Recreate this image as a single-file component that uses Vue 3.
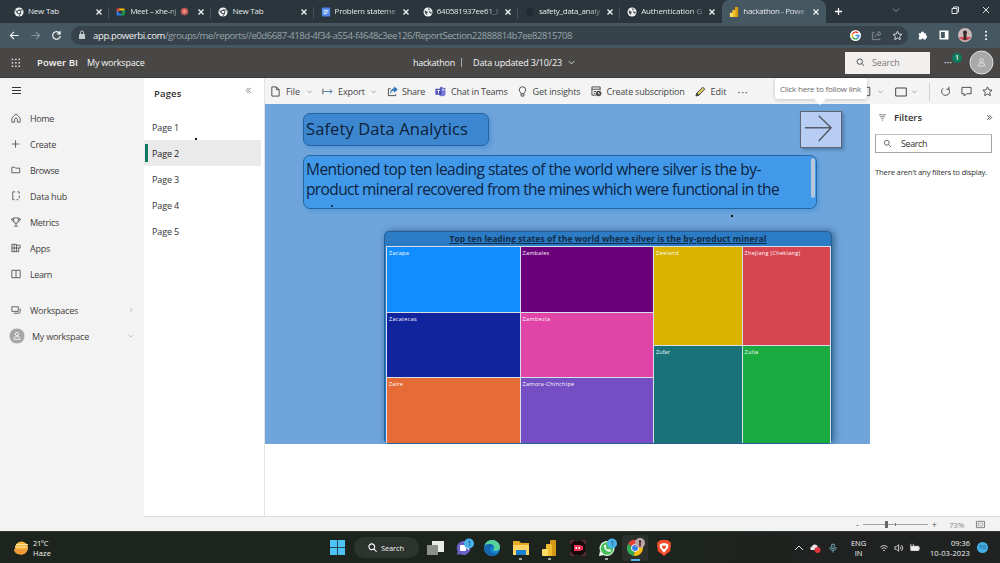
<script setup>
// Spreads or tightens a label's letters so that it takes the given width.
const vFit = {
  mounted(el, { value }) {
    const range = document.createRange()
    range.selectNodeContents(el)
    const natural = range.getBoundingClientRect().width
    const count = el.textContent.trim().length
    if (value && count) el.style.letterSpacing = `${((value - natural) / count).toFixed(3)}px`
  }
}

const tabs = [
  { icon: 'chrome', title: 'New Tab', w: 31 },
  { icon: 'meet', title: 'Meet – xhe-nj', w: 46, rec: true },
  { icon: 'chrome', title: 'New Tab', w: 31 },
  { icon: 'docs', title: 'Problem stateme', w: 61, nosep: true },
  { icon: 'globe', title: '640581937ee61_l', w: 61 },
  { icon: 'github', title: 'safety_data_analy', w: 61 },
  { icon: 'globe', title: 'Authentication G', w: 61, nosep: true },
  { icon: 'pbi', title: 'hackathon - Powe', w: 61, active: true }
]

const nav = [
  { label: 'Home', w: 24, d: 'M2 6.5 6.5 2 11 6.5V11H8V8a1.5 1.5 0 0 0-3 0v3H2z' },
  { label: 'Create', w: 26, d: 'M6 2.5v8M2 6.5h8' },
  { label: 'Browse', w: 29, d: 'M2 3.5h3l1 1h4.5v5H2z' },
  { label: 'Data hub', w: 37, d: 'M5.5 2H3v8.5h2M8 2h2v2M10 6v3M7 10.5h2' },
  { label: 'Metrics', w: 29, d: 'M4 2h5v3.5a2.5 2.5 0 0 1-5 0zM4 3H2v1.5l2 1.5M9 3h2v1.5L9 6M6.5 8v2.5M4.5 11h4' },
  { label: 'Apps', w: 20, d: 'M2 2.5h5v8H2zM2 6.5h7.5v4H7M7 3.5h4v3H9M4.5 2.5v8' },
  { label: 'Learn', w: 22, d: 'M2 2.5h9v8H2zM6.5 2.5v8' }
]

const pages = ['Page 1', 'Page 2', 'Page 3', 'Page 4', 'Page 5']

const leftTiles = [
  { name: 'Zacapa', color: '#118dff', w: 20 },
  { name: 'Zambales', color: '#6b007b', w: 27 },
  { name: 'Zacatecas', color: '#12239e', w: 28 },
  { name: 'Zambezia', color: '#e044a7', w: 28 },
  { name: 'Zaire', color: '#e66c37', w: 14 },
  { name: 'Zamora-Chinchipe', color: '#744ec2', w: 52 }
]
const rightTiles = [
  { name: 'Zeeland', color: '#d9b300', w: 23 },
  { name: 'Zhejiang (Chekiang)', color: '#d64550', w: 56 },
  { name: 'Zufar', color: '#197278', w: 14 },
  { name: 'Zulia', color: '#1aab40', w: 14 }
]
</script>

<template>
  <div class="screen">
    <header class="tabs">
      <div v-for="(t, i) in tabs" :key="i" class="tab" :class="{ active: t.active, sep: !t.active && !t.nosep }">
        <svg class="fav" viewBox="0 0 12 12">
          <g v-if="t.icon === 'chrome'">
            <circle cx="6" cy="6" r="5.5" fill="#eef1f2" />
            <circle cx="6" cy="6" r="2.2" fill="#eef1f2" stroke="#39444b" stroke-width="1.2" />
            <path d="M6 3.5h5M3.8 7.2 1.6 3.2M8.1 7.4 5.8 11.3" stroke="#39444b" stroke-width="1" />
          </g>
          <g v-else-if="t.icon === 'meet'" fill="none" stroke-width="2.4">
            <path d="M2 6V3h3" stroke="#e94235" />
            <path d="M4 3h5v2" stroke="#fbbc05" />
            <path d="M9 4v5H6" stroke="#14a04b" />
            <path d="M2 5v4h4" stroke="#2b7de9" />
            <path d="m9 6 2-2v4z" fill="#14a04b" stroke="none" />
          </g>
          <g v-else-if="t.icon === 'docs'">
            <rect x="1" y=".5" width="10" height="11" rx="1" fill="#4f86ec" />
            <path d="M3 4h6M3 6h6M3 8h4" stroke="#fff" />
          </g>
          <g v-else-if="t.icon === 'globe'">
            <circle cx="6" cy="6" r="5.4" fill="#edf0f1" />
            <path d="m2 4 2.5 1L6 6.500 4.500 8 5 10 2.500 7.500zM6 1.500l2.500 1L7 4.500 9 6l1.500-.5-.5 2.500-2-.5" fill="#46525a" />
          </g>
          <circle v-else-if="t.icon === 'github'" cx="6" cy="6" r="5" fill="#222c33" />
          <g v-else>
            <rect x="7" y="0" width="4" height="12" rx=".8" fill="#d99a12" />
            <rect x="4" y="3.500" width="4" height="8.500" rx=".8" fill="#f2bd27" />
            <rect x="1" y="7" width="4" height="5" rx=".8" fill="#fbdc64" />
          </g>
        </svg>
        <div class="tab-title" :class="{ fade: t.w > 40 }"><span v-fit="t.w">{{ t.title }}</span></div>
        <svg v-if="t.rec" class="rec" viewBox="0 0 10 10">
          <circle cx="5" cy="5" r="3.9" fill="#d9625f" stroke="#a4534f" />
          <circle cx="5" cy="5" r="1.500" fill="#f3a29b" />
        </svg>
        <svg class="close" viewBox="0 0 8 8"><path d="m1.500 1.500 5 5m0-5-5 5" /></svg>
      </div>
      <svg class="newtab" viewBox="0 0 10 10"><path d="M5 1v8M1 5h8" /></svg>
      <div class="winctl">
        <svg viewBox="0 0 10 10" class="dim"><path d="m2 3.500 3 3 3-3" /></svg>
        <svg viewBox="0 0 10 10"><path d="M2 3.500h5v5H2zM3.500 3.500V2h5v5H7" /></svg>
        <svg viewBox="0 0 10 10"><path d="m2 2 6 6m0-6L2 8" /></svg>
      </div>
    </header>

    <div class="address">
      <svg class="nv" viewBox="0 0 12 12"><path d="M10.500 6h-9M5.500 2l-4 4 4 4" /></svg>
      <svg class="nv off" viewBox="0 0 12 12"><path d="M1.500 6h9M6.500 2l4 4-4 4" /></svg>
      <svg class="nv" viewBox="0 0 12 12"><path d="M9.500 3.500A4.200 4.200 0 1 0 10.200 6.500M10 1v3.300H6.700" /></svg>
      <div class="pill">
        <svg class="lock" viewBox="0 0 8 10"><rect x="1" y="4" width="6" height="5" rx=".6" fill="#c3cace" /><path d="M2.500 4V2.500a1.500 1.500 0 0 1 3 0V4" fill="none" stroke="#c3cace" /></svg>
        <div class="url"><b v-fit="72">app.powerbi.com</b><span v-fit="407">/groups/me/reports//e0d6687-418d-4f34-a554-f4648c3ee126/ReportSection22888814b7ee82815708</span></div>
        <svg class="g" viewBox="0 0 12 12">
          <circle cx="6" cy="6" r="6" fill="#fff" />
          <g fill="none" stroke-width="1.600">
            <path d="M8.600 3.300A3.600 3.600 0 0 0 2.800 4.400" stroke="#ea4335" />
            <path d="M2.800 4.400a3.600 3.600 0 0 0 0 3.200" stroke="#fbbc05" />
            <path d="M2.800 7.600a3.600 3.600 0 0 0 5.500 1.300" stroke="#34a853" />
            <path d="M8.300 8.900A3.600 3.600 0 0 0 9.600 6.100H6" stroke="#4285f4" />
          </g>
        </svg>
        <svg class="share" viewBox="0 0 12 12"><path d="M4 3H1.500v7.500h8V9M4 8c.5-2.500 2-3.500 4-3.500V6.500L11 4 8 1.500v2" /></svg>
        <svg class="st" viewBox="0 0 12 12"><path d="m6 1.300 1.400 3.100 3.400.4-2.500 2.300.7 3.400L6 8.800l-3 1.700.7-3.400L1.200 4.800l3.400-.4z" /></svg>
      </div>
      <svg class="ext" viewBox="0 0 12 12"><path d="M1 4h2.800a1.600 1.600 0 1 1 3 0H9.500v2.500a1.500 1.500 0 1 1 0 3V11.500H6.800a1.400 1.400 0 0 0-2.800 0H1V8.500a1.400 1.400 0 0 0 0-2.500z" fill="#fff" /></svg>
      <svg class="panel" viewBox="0 0 10 10"><path d="M1.200 1.200h7.600v7.600H1.200z" fill="none" stroke="#fff" stroke-width="1.400" /><path d="M5.800 1h3v8h-3z" fill="#fff" /></svg>
      <svg class="me" viewBox="0 0 14 14"><circle cx="7" cy="7" r="7" fill="#c9b9b8" /><path d="M1 9h12a7 7 0 0 1-12 0" fill="#d94b5b" /><circle cx="7" cy="4.500" r="2" fill="#302625" /><path d="M5.500 6h3v6h-3z" fill="#40292b" /></svg>
      <svg class="dots" viewBox="0 0 4 12"><circle cx="2" cy="2" r="1.100" /><circle cx="2" cy="6" r="1.100" /><circle cx="2" cy="10" r="1.100" /></svg>
    </div>

    <div class="pbi-head">
      <svg class="waffle" viewBox="0 0 10 10"><g fill="#dedddc"><template v-for="r in 3" :key="r"><rect v-for="c in 3" :key="c" :x="c * 3.400 - 2.700" :y="r * 3.400 - 2.700" width="1.500" height="1.500" /></template></g></svg>
      <b class="brand" v-fit="41">Power BI</b>
      <span class="ws" v-fit="57.500">My workspace</span>
      <span class="rep" v-fit="42">hackathon</span><i class="bar"></i>
      <span class="upd" v-fit="89">Data updated 3/10/23</span>
      <svg class="hchev" viewBox="0 0 8 8"><path d="m1 2.500 3 3 3-3" /></svg>
      <div class="hsearch">
        <svg viewBox="0 0 10 10"><circle cx="4.200" cy="4" r="3" /><path d="M6.400 6.200 9 8.800" /></svg>
        <span v-fit="27.500">Search</span>
      </div>
      <div class="more">···<em>1</em></div>
      <svg class="avatar" viewBox="0 0 24 24"><circle cx="12" cy="12" r="12" fill="#a9a9a9" /><circle cx="12" cy="9.800" r="1.900" /><path d="M8.800 15.500v-1.500c0-2 6.400-2 6.400 0v1.500z" /></svg>
    </div>

    <main>
      <nav>
        <svg class="burger" viewBox="0 0 9 9"><path d="M0 1.500h9M0 4.500h9M0 7.500h9" /></svg>
        <ul>
          <li v-for="n in nav" :key="n.label">
            <svg viewBox="0 0 13 13"><path :d="n.d" /></svg><span v-fit="n.w">{{ n.label }}</span>
          </li>
          <li class="gap">
            <svg viewBox="0 0 13 13"><path d="M2 3h7v5H2zM4 10h5.500a1.500 1.500 0 0 0 1.500-1.500V5" /></svg><span v-fit="48">Workspaces</span>
            <svg class="chev" viewBox="0 0 8 8"><path d="m2.500 1 3 3-3 3" /></svg>
          </li>
          <li class="mine">
            <svg class="av" viewBox="0 0 24 24"><circle cx="12" cy="12" r="12" fill="#a6a6a6" /><circle cx="12" cy="9" r="2.500" /><path d="M7.500 17v-2c0-2.800 9-2.800 9 0v2z" /></svg><span v-fit="57">My workspace</span>
            <svg class="chev" viewBox="0 0 8 8"><path d="m1 2.500 3 3 3-3" /></svg>
          </li>
        </ul>
      </nav>

      <div class="work">
        <aside class="pages">
          <div class="ptitle"><span v-fit="27.500">Pages</span>
            <svg viewBox="0 0 8 8"><path d="M4 1 1.500 4 4 7M6.500 1 4 4l2.500 3" /></svg>
          </div>
          <div v-for="p in pages" :key="p" class="page" :class="{ on: p === 'Page 2' }"><span v-fit="27">{{ p }}</span></div>
        </aside>

        <section class="report">
          <div class="toolbar">
            <svg class="tfile" viewBox="0 0 12 12"><path d="M2 1h5l3 3v7H2zM7 1v3h3" /></svg><span v-fit="14">File</span>
            <svg class="c c1" viewBox="0 0 8 8"><path d="m1.500 3 2.500 2.500L6.500 3" /></svg>
            <svg class="texp" viewBox="0 0 12 12"><path d="M1 3v6" /><path d="M2 6h9M8.500 3.500 11 6 8.500 8.500" stroke="#3f78a8" /></svg><span v-fit="27">Export</span>
            <svg class="c c2" viewBox="0 0 8 8"><path d="m1.500 3 2.500 2.500L6.500 3" /></svg>
            <svg class="tshare" viewBox="0 0 12 12"><path d="M4 3H1.500v7.500h8V9" /><path d="M4 8c.5-2.500 2-3 4-3V7l3.300-3.300L8 .8v2C5 3 4 5 4 8z" fill="#2672b8" stroke="#2672b8" stroke-width=".5" /></svg><span v-fit="23">Share</span>
            <svg class="tteams" viewBox="0 0 12 12"><g stroke="none"><circle cx="7" cy="2.500" r="1.600" fill="#6264c7" /><circle cx="10.300" cy="3" r="1.200" fill="#5658b5" /><path d="M4 4.500h7.500v4a2.500 2.500 0 0 1-3 2.500C6 12 4 10.500 4 8z" fill="#7779d4" /><rect x=".5" y="3" width="6.500" height="6.500" fill="#474ab0" /></g><path d="M2 4.800h3.500M3.750 4.800V8.300" stroke="#fff" /></svg><span v-fit="56.500">Chat in Teams</span>
            <svg class="tbulb" viewBox="0 0 12 12"><path d="M4.500 8.500C4.500 7 2.500 6.500 2.500 4.300a3.500 3.500 0 0 1 7 0C9.500 6.500 7.500 7 7.500 8.500zM4.500 11h3M4.500 8.500V11m3 0V8.500" /></svg><span v-fit="48">Get insights</span>
            <svg class="tsub" viewBox="0 0 12 12"><path d="M5.500 10H1V1h9v3.500M1 3.500h9M3 6h2.500M3 8h1.500" /><circle cx="8.300" cy="8.300" r="3" fill="#4b4a49" stroke="none" /><path d="M8.300 6.500v2h1.500" stroke="#fff" stroke-width=".8" /></svg><span v-fit="78">Create subscription</span>
            <svg class="tedit" viewBox="0 0 12 12"><path d="m1.200 10.800.8-3L8.500 1.300l2.200 2.200L4.200 10z" fill="#d8ca68" /><path d="m1.200 10.800 3-.8L2 7.800z" fill="#444" /></svg><span v-fit="16">Edit</span>
            <span class="ell" v-fit="11">···</span>
            <div class="tright">
              <svg class="r1" viewBox="0 0 12 12"><path d="M1 1.500h7.500v9H1" /></svg>
              <svg class="c" viewBox="0 0 8 8"><path d="m1.500 3 2.500 2.500L6.500 3" /></svg>
              <svg class="r2" viewBox="0 0 12 12"><path d="M.7 2h10.600v8H.7z" /></svg>
              <svg class="c" viewBox="0 0 8 8"><path d="m1.500 3 2.500 2.500L6.500 3" /></svg>
              <i></i>
              <svg class="r3" viewBox="0 0 12 12"><path d="M9 2.800a4.300 4.300 0 1 1-5.500-.3M9.800.8v2.700H7" /></svg>
              <svg class="r4" viewBox="0 0 12 12"><path d="M1 1.500h10v7H6L3.500 11V8.500H1z" /></svg>
              <svg class="r5" viewBox="0 0 12 12"><path d="m6 1 1.500 3.200 3.500.4-2.600 2.400.7 3.500L6 8.800l-3.100 1.700.7-3.500L1 4.600l3.500-.4z" /></svg>
            </div>
          </div>

          <div class="body">
            <div class="canvas">
              <div class="row1">
                <div class="title"><span v-fit="162">Safety Data Analytics</span></div>
                <div class="go">
                  <svg viewBox="0 0 42 38"><path d="M3.500 17h28M18.500 4l13.500 13-13.500 14.500" /></svg>
                  <div class="tip"><span v-fit="81">Click here to follow link</span></div>
                </div>
              </div>
              <div class="desc">
                <p><span v-fit="455">Mentioned top ten leading states of the world where silver is the by-</span></p>
                <p><span v-fit="473">product mineral recovered from the mines which were functional in the</span></p>
                <i class="idot"></i>
                <i class="thumb"></i>
              </div>
              <div class="chart">
                <h3><span v-fit="317">Top ten leading states of the world where silver is the by-product mineral</span></h3>
                <div class="tree">
                  <div class="lt"><div v-for="t in leftTiles" :key="t.name" :style="{ background: t.color }"><span v-fit="t.w">{{ t.name }}</span></div></div>
                  <div class="rt"><div v-for="t in rightTiles" :key="t.name" :style="{ background: t.color }"><span v-fit="t.w">{{ t.name }}</span></div></div>
                </div>
              </div>
            </div>
            <aside class="filters">
              <div class="fhead">
                <svg class="fi" viewBox="0 0 10 10"><path d="M1 2h8M2.200 4.200h5.600M3.500 6.400h3M4.500 8.500h1" /></svg>
                <b v-fit="28">Filters</b>
                <svg class="ff" viewBox="0 0 8 8"><path d="M1.500 1.500 4 4 1.500 6.500M4 1.500 6.500 4 4 6.500" /></svg>
              </div>
              <div class="fsearch"><svg viewBox="0 0 10 10"><circle cx="4.200" cy="4.200" r="2.700" /><path d="m6.200 6.200 2.600 2.600" /></svg><span v-fit="26">Search</span></div>
              <p><span v-fit="112">There aren't any filters to display.</span></p>
            </aside>
          </div>
        </section>

        <footer class="zoombar">
          <span>-</span><div class="slider"><i></i></div><span class="pl">+</span>
          <span class="pct" v-fit="15">73%</span>
          <svg viewBox="0 0 12 10"><path d="M1.500 1.500h9v7h-9z" /><path d="M3.500 3.500h5v3h-5z" stroke-width=".6" /></svg>
        </footer>
      </div>
    </main>

    <footer class="taskbar">
      <div class="weather">
        <svg viewBox="0 0 16 16"><circle cx="8.500" cy="8" r="6.500" fill="#f6b73c" /><path d="M1 9h13c0 4-3 5.500-6 5.500S1 13.500 1 9" fill="#f09a38" /><path d="M3 4.500h12M2 7h12" stroke="#ffe2a0" stroke-width="1" /></svg>
        <div><span v-fit="15">21°C</span><span v-fit="18">Haze</span></div>
      </div>
      <div class="apps">
        <svg class="win" viewBox="0 0 16 16"><path d="M0 0h7.600v7.600H0zM8.400 0H16v7.600H8.400zM0 8.400h7.600V16H0zM8.400 8.400H16V16H8.400z" fill="#4cc2f5" /></svg>
        <div class="tsearch"><svg viewBox="0 0 10 10"><circle cx="4.200" cy="4.200" r="3.200" /><path d="m6.500 6.500 3 3" /></svg><span v-fit="23">Search</span></div>
        <svg class="a" viewBox="0 0 18 18"><path d="M6 2h12v11H6z" fill="#e9ebe9" /><path d="M1 6h11v10H1z" fill="#8c8f8c" /></svg>
        <svg class="a" viewBox="0 0 18 18"><path d="M8 2a7 7 0 1 1-3 13l-3 1 .7-3.500A7 7 0 0 1 8 2" fill="#6b62c8" /><rect x="5" y="6" width="6" height="6" rx="1" fill="#fff" /><path d="m11 8 3-2v5l-3-2z" fill="#fff" /><circle cx="14" cy="4.500" r="5" fill="#4ab2ea" /><text x="12.600" y="7" fill="#123a58">1</text></svg>
        <svg class="a" viewBox="0 0 18 18"><circle cx="9" cy="9" r="8" fill="#1681d0" /><path d="M1.500 7C3 2 7 .8 10 1.100c4.500.5 7 4 7 7 0 3-2.500 4-5 4-1.500 0-2-1-1.200-2C12 7.500 10 5 7 5S2 6 1.500 7" fill="#55d39a" /><path d="M1 8c1-2.500 4-3.500 6.500-3 1.700.3 2.800 1.500 2.800 2.800C7 7.500 6 11 8 13c1.700 2 5 2 6.500 1.500C10 19 .5 17 1 8" fill="#1767ad" /></svg>
        <svg class="a run" viewBox="0 0 18 18"><path d="M1 2h6l2 2h8v12H1z" fill="#e9a927" /><path d="M1 6h16v10H1z" fill="#ffd666" /><path d="M4 11h10v5H4z" fill="#1780d1" /></svg>
        <svg class="a run" viewBox="0 0 18 18"><rect x="10" y="1" width="6" height="16" rx="1" fill="#d79817" /><rect x="6" y="5" width="6" height="12" rx="1" fill="#efbd2d" /><rect x="2" y="10" width="6" height="7" rx="1" fill="#fbdc67" /></svg>
        <svg class="a" viewBox="0 0 18 18"><rect x="2" y="2" width="14" height="14" rx="2" fill="#180a0c" /><path d="M5 6h7v1h2v4h-2v1H5z" fill="#e33552" /><path d="M6.500 8h1.500v2H6.500zM9.500 8H11v2H9.500z" fill="#fff" /><path d="M2 5V2h3M13 2h3v3M2 13v3h3M13 16h3v-3" fill="none" stroke="#8c3944" /></svg>
        <svg class="a run" viewBox="0 0 18 18"><circle cx="9" cy="9.500" r="7.500" fill="#e9f6e9" /><path d="m1 17 1-5 4 4z" fill="#e9f6e9" /><circle cx="9" cy="9.500" r="6.300" fill="#42bd58" /><path d="M6.500 6c-2 2 2.500 8 6 6.500l.5-1.500-2-1-1 1-2.500-2.500.8-1-1-2z" fill="#fff" /><circle cx="14" cy="4.500" r="5" fill="#4ab2ea" /><text x="12.600" y="7" fill="#123a58">1</text></svg>
        <div class="act"><svg class="a" viewBox="0 0 18 18"><path d="M9 9 2 5a8 8 0 0 1 14 0z" fill="#e34335" /><path d="M9 9 2 5a8 8 0 0 0 6 12z" fill="#36a852" /><path d="M9 9h8a8 8 0 0 1-9 8z" fill="#f9bd13" /><path d="M9 5h7.500a8 8 0 0 1 .5 4H9z" fill="#f9bd13" /><circle cx="9" cy="9" r="3.800" fill="#fff" /><circle cx="9" cy="9" r="3" fill="#397fe8" /><circle cx="14" cy="4" r="5" fill="#b7aaa8" /><circle cx="14" cy="2.500" r="1.300" fill="#392b2a" /><path d="M13 3.500h2v4h-2z" fill="#7e3138" /></svg></div>
        <svg class="a" viewBox="0 0 18 18"><path d="m4 2 2-1h6l2 1 2 2-.7 8L9 17l-6.300-5L2 4z" fill="#f04b2b" /><path d="m5 5 4-1 4 1 .5 3L9 14 4.500 8z" fill="#fff" /><path d="m6.500 6.500 2.500.5 2.500-.5L10 10H8z" fill="#f04b2b" /></svg>
      </div>
      <div class="tray">
        <svg viewBox="0 0 10 10" class="t1"><path d="m1 7 4-4 4 4" /></svg>
        <svg viewBox="0 0 12 12" class="t2"><path d="M2 8a2 2 0 0 1 1-3.500A3 3 0 0 1 8.500 4L9 8z" fill="#e8e8e8" stroke="none" /><circle cx="8.500" cy="8" r="3" fill="#df3541" stroke="none" /></svg>
        <svg viewBox="0 0 10 12" class="t3"><path d="M3.500 1.500h3v5h-3zM1.500 5v1.500c0 3 7 3 7 0V5M5 9v2.500" stroke="#79c4cd" /></svg>
        <div class="lang"><span v-fit="15">ENG</span><span v-fit="7.500">IN</span></div>
        <svg viewBox="0 0 12 12" class="t4"><path d="M1.500 5a6.500 6.500 0 0 1 9 0M3.200 7a4 4 0 0 1 5.600 0M5 9h2" /></svg>
        <svg viewBox="0 0 12 12" class="t5"><path d="M1 4.500h2L5.500 2v8L3 7.500H1zM7.500 4.500a2 2 0 0 1 0 3M9 2.500a5 5 0 0 1 0 7" /></svg>
        <svg viewBox="0 0 14 12" class="t6"><path d="M2 4h9.500v5H2zM12.500 5.500v2" fill="#eee" /><path d="M2 1v4a2 2 0 0 0 3 0V1" /></svg>
        <div class="clock"><span v-fit="19">09:36</span><span v-fit="40">10-03-2023</span></div>
        <div class="note">10</div>
      </div>
    </footer>

    <i class="speck s1"></i><i class="speck s2"></i>
  </div>
</template>

<style>
body { overflow: hidden; }
</style>

<style scoped>
* { box-sizing: border-box; }
.screen { width: 1000px; height: 563px; position: relative; overflow: hidden; display: flex; flex-direction: column; background: #fff; font-family: "Open Sans", "Noto Sans", sans-serif; font-size: 9px; color: #333; white-space: nowrap; }
svg { display: block; flex: none; overflow: visible; }
p, h3, ul { margin: 0; padding: 0; }

.tabs { height: 23px; flex: none; background: #2a353c; display: flex; align-items: center; padding-left: 7px; color: #e6e9eb; }
.tab { width: 102.2px; height: 23px; flex: none; display: flex; align-items: center; padding: 0 6px 0 7px; font-size: 8px; line-height: 12px; }
.tab.sep { background: linear-gradient(#46525a, #46525a) 100% 60% / 1px 12px no-repeat; }
.tab.active { background: #455760; border-radius: 7px 7px 0 0; width: 104px; margin-right: 8px; }
.fav { width: 10px; height: 10px; margin-right: 4px; }
.tab-title { flex: 1; height: 14px; }
.fade { -webkit-mask-image: linear-gradient(90deg, #000 76%, #0003); mask-image: linear-gradient(90deg, #000 76%, #0003); }
.rec { width: 9px; height: 9px; margin-right: 5px; }
.close { width: 8px; height: 8px; margin-left: 3px; fill: none; stroke: #f2f4f5; stroke-width: 1.3; }
.newtab { width: 9px; height: 9px; fill: none; stroke: #fff; stroke-width: 1.4; }
.winctl { margin-left: auto; display: flex; align-items: center; padding: 0 9px 3px 0; }
.winctl svg { width: 10px; height: 10px; fill: none; stroke: #dfe3e5; stroke-width: 1; }
.winctl svg + svg { margin-left: 21px; }
.winctl .dim { stroke: #87939a; margin-right: 28px; }

.address { height: 25px; flex: none; background: #455760; display: flex; align-items: center; padding: 0 0 1px 9px; }
.nv { width: 11px; height: 11px; margin-right: 10px; fill: none; stroke: #eef1f2; stroke-width: 1.3; }
.nv.off { stroke: #84929a; }
.nv:nth-child(3) { margin-right: 9px; }
.pill { width: 837px; height: 19px; border-radius: 10px; background: #37434a; display: flex; align-items: center; padding-left: 7px; }
.lock { width: 8px; height: 10px; }
.url { margin-left: 7px; width: 757px; font-size: 9.5px; color: #98a4ab; }
.url b { font-weight: 400; color: #edf0f2; }
.g { width: 11px; height: 11px; }
.share, .st { width: 11px; height: 11px; fill: none; stroke: #aab4b9; stroke-width: 1; }
.share { margin-left: 10px; opacity: .7; }
.st { margin-left: 10px; stroke: #e0e5e7; }
.ext { width: 10px; height: 10px; margin-left: 10px; }
.panel { width: 10px; height: 10px; margin-left: 11px; }
.me { width: 14px; height: 14px; margin-left: 9px; }
.dots { width: 4px; height: 11px; fill: #fff; margin-left: 12px; }

.pbi-head { height: 30px; flex: none; background: #484746; display: flex; align-items: center; color: #f5f5f5; padding-left: 11px; font-size: 9px; border-bottom: 1px solid #3c3b3a; }
.waffle { width: 10px; height: 10px; margin-right: 16px; }
.brand { font-weight: 600; font-size: 9.5px; width: 50px; }
.ws { width: 326px; }
.rep { width: 48px; }
.bar { width: 1px; height: 9px; background: #aaa; margin-right: 11px; }
.upd { width: 95px; }
.hchev { width: 7px; height: 7px; fill: none; stroke: #e5e5e5; }
.hsearch { width: 85px; height: 22px; background: #f1f0ef; margin-left: 270px; display: flex; align-items: center; padding-left: 11px; color: #7b7a79; }
.hsearch svg { width: 9px; height: 9px; fill: none; stroke: #444; margin-right: 7px; }
.more { width: 18px; height: 20px; margin-left: 14px; font-size: 10px; position: relative; line-height: 18px; }
.more em { position: absolute; left: 8px; top: 0; width: 10px; height: 10px; border-radius: 50%; background: #0f7a5c; font: 600 7px/10px "Open Sans", sans-serif; text-align: center; }
.avatar { width: 23px; height: 23px; margin-left: 8px; fill: none; stroke: #e3e3e3; }

main { height: 453px; flex: none; display: flex; }
nav { width: 144px; background: #f3f3f3; padding: 8px 0 0 10px; color: #3f3e3d; }
.burger { width: 9px; height: 9px; stroke: #333; stroke-width: 1; margin-left: 2px; }
nav ul { list-style: none; padding-top: 10px; }
nav li { height: 26px; display: flex; align-items: center; }
nav li svg { width: 12px; height: 12px; fill: none; stroke: #4a4948; stroke-width: .9; margin-right: 8px; }
nav li.gap { margin-top: 10px; }
nav li svg.av { width: 16px; height: 16px; margin: 0 7px 0 -1px; stroke: #eee; stroke-width: 1.5; }
nav li svg.chev { width: 6px; height: 6px; margin: 0 10px 0 auto; stroke: #a5a4a3; }

.work { flex: 1; display: grid; grid-template: 438px 15px / 121px 735px; }
.pages { background: #fff; border-right: 1px solid #e3e2e1; }
.ptitle { height: 36px; display: flex; align-items: flex-start; justify-content: space-between; padding: 9px 12px 0 10px; font-weight: 600; font-size: 9.5px; line-height: 13px; }
.ptitle svg { width: 7px; height: 7px; fill: none; stroke: #777; }
.page { height: 26px; width: 117px; display: flex; align-items: center; padding: 0 0 0 8px; }
.page.on { background: #ebeaea; color: #222; }
.page.on::before { content: ""; width: 3px; height: 18px; background: #117865; margin: 0 4px 0 -7px; }

.report { display: flex; flex-direction: column; overflow: visible; }
.toolbar { height: 26px; background: #f4f4f4; display: flex; align-items: center; padding: 1px 0 0 5px; color: #444; }
.toolbar svg { width: 11px; height: 11px; fill: none; stroke: #444; stroke-width: 1; }
.toolbar svg + span { margin-left: 4px; }
.toolbar svg.c { width: 7px; height: 7px; stroke: #999; }
.toolbar .tfile + span { margin-left: 5px; }
.c1 { margin-left: 6px; }
.toolbar .texp { margin-left: 9px; }
.toolbar .texp + span { margin-left: 5px; }
.c2 { margin-left: 5px; }
.tshare { margin-left: 10px; }
.tteams { margin-left: 10px; }
.toolbar .tteams + span { margin-left: 5px; }
.tbulb { margin-left: 9px; }
.toolbar .tbulb + span { margin-left: 5px; }
.tsub { margin-left: 10px; }
.toolbar .tsub + span { margin-left: 5px; }
.tedit { margin-left: 10px; }
.toolbar .tedit + span { margin-left: 5px; }
.ell { margin-left: 11px; font-size: 11px; }
.tright { margin-left: auto; display: flex; align-items: center; padding-right: 7px; }
.tright .r1 { width: 11px; margin-right: 4px; }
.tright .r2 { width: 12px; height: 12px; margin: 0 4px 0 11px; }
.tright i { width: 1px; height: 18px; background: #d2d1d0; margin: 0 10px 0 11px; }
.tright .r3, .tright .r5 { width: 11px; height: 11px; }
.tright .r4 { width: 11px; height: 11px; margin: 0 10px; }

.body { display: flex; flex: 1; }
.canvas { width: 605px; height: 340px; background: #6fa5da; padding: 8px 28px 0 38px; }
.row1 { display: flex; justify-content: space-between; align-items: flex-start; height: 43px; }
.title { width: 186px; height: 33px; margin-top: 1px; border: 1px solid #24639f; border-radius: 7px; background: #3d87d0; padding-left: 2px; font-size: 16.5px; line-height: 30px; color: #0d2137; box-shadow: 2px 2px 5px #4d92d8; }
.go { width: 42px; height: 37px; margin-top: -1px; border: 1.5px solid #5f6673; background: #b8cdf4; box-shadow: 2px 2px 3px #4d7dad; position: relative; }
.go svg { width: 40px; height: 35px; fill: none; stroke: #565b65; stroke-width: 1.6; }
.tip { position: absolute; left: -26px; top: -34px; width: 92px; height: 21px; border-radius: 3px; background: #fff; font-size: 8px; line-height: 21px; padding-left: 5px; color: #6a6867; box-shadow: 0 1px 4px #0003; }
.tip::after { content: ""; position: absolute; left: 39px; bottom: -6px; border: solid transparent; border-width: 6px 6px 0; border-top-color: #fff; }
.desc { width: 514px; height: 54px; border: 1px solid #24679f; border-radius: 7px; background: #4299ea; overflow: hidden; padding: 3px 0 0 2px; font-size: 15.5px; line-height: 20px; color: #0c2440; box-shadow: 2px 2px 5px #4f96dc; position: relative; }
.desc p { height: 20px; }
.desc .thumb { position: absolute; right: 1px; top: 2px; width: 4px; height: 40px; border-radius: 2px; background: #b5c7dc; }
.desc .idot { position: absolute; left: 27px; bottom: 1px; width: 2px; height: 2px; background: #17406d; }
.chart { width: 448px; height: 213px; margin: 22px 0 0 81px; border: 1px solid #245f96; border-radius: 5px; background: #2b7bc5; box-shadow: 2px 0 7px #315f8c; clip-path: inset(-8px -12px 0 -8px); }
.chart h3 { height: 14px; text-align: center; font-size: 8.500px; line-height: 14px; font-weight: 700; color: #122b47; text-decoration: underline; }
.tree { display: flex; gap: 1px; width: 445px; height: 197px; margin-left: 1px; padding: 1px 1px 0; background: #d6dfea; color: #fff; font-size: 5.5px; line-height: 8px; }
.lt, .rt { display: grid; gap: 1px; }
.lt { width: 266px; grid-template: repeat(3, 1fr) / 1fr 1fr; }
.rt { flex: 1; grid-template: 1fr 1fr / 1fr 1fr; }
.tree div div { padding: 2px 0 0 2px; min-width: 0; min-height: 0; }

.filters { flex: 1; background: #fff; padding: 0 0 0 5px; }
.fhead { height: 30px; display: flex; align-items: center; padding: 0 7px 4px 3px; }
.fi { width: 9px; height: 9px; stroke: #777; }
.fhead b { font-size: 9.5px; font-weight: 600; margin-left: 7px; }
.ff { width: 7px; height: 7px; margin-left: auto; fill: none; stroke: #444; stroke-width: 1.100; }
.fsearch { width: 117px; height: 19px; border: 1px solid #a5a4a3; border-top-color: #c4c3c2; display: flex; align-items: center; padding-left: 7px; }
.fsearch svg { width: 9px; height: 9px; fill: none; stroke: #555; margin-right: 9px; }
.filters p { font-size: 7.800px; margin-top: 14px; line-height: 10px; }

.zoombar { grid-column: 1 / 3; background: #f3f3f3; border-top: 1px solid #dedddc; display: flex; align-items: center; justify-content: flex-end; padding-right: 14px; color: #555; }
.slider { width: 65px; height: 1px; background: #a09f9e; margin: 0 4px; position: relative; }
.slider::before { content: ""; position: absolute; left: 22px; top: -3px; width: 3px; height: 7px; background: #666; }
.slider i { position: absolute; left: 32px; top: -1px; width: 1px; height: 3px; background: #777; }
.pct { margin-left: 12px; color: #888; font-size: 8px; width: 15px; }
.zoombar svg { width: 11px; height: 9px; margin-left: 11px; fill: none; stroke: #777; }

.taskbar { height: 32px; flex: none; background: linear-gradient(90deg, #1d231d 70%, #202221 85%); border-top: 1px solid #323632; display: flex; align-items: center; color: #f1f2f1; font-size: 7.500px; line-height: 10px; }
.weather { display: flex; align-items: center; padding-left: 13px; width: 330px; flex: none; }
.weather svg { width: 16px; height: 16px; margin-right: 4px; }
.weather div, .lang, .clock { display: flex; flex-direction: column; }
.apps { display: flex; align-items: center; flex: none; }
.win { width: 15px; height: 15px; }
.tsearch { width: 65px; height: 21px; flex: none; margin: 0 7px 0 9px; border-radius: 11px; background: #2d332e; display: flex; align-items: center; padding-left: 14px; }
.tsearch svg { width: 9px; height: 9px; margin-right: 4px; fill: none; stroke: #fff; stroke-width: 1.2; }
.a { width: 18px; height: 18px; margin-right: 10.600px; }
.a text { font: 7px "Open Sans", sans-serif; }
.apps > .a.run { background: linear-gradient(#a6a8a6, #a6a8a6) 50% 100% / 3px 2px no-repeat; height: 24px; padding: 3px 0; }
.act { width: 26px; height: 26px; margin: 0 6.600px 0 -4px; border-radius: 3px; background: linear-gradient(#55b3e6, #55b3e6) 50% 100% / 9px 2px no-repeat #2b302c; padding: 4px; }
.act .a { margin: 0; }
.apps > .a:last-child { margin-right: 0; }
.tray { margin-left: auto; display: flex; align-items: center; padding-right: 12px; }
.tray svg { width: 10px; height: 10px; fill: none; stroke: #e5e5e5; stroke-width: 1; }
.tray .t2 { margin-left: 5px; width: 12px; height: 12px; }
.tray .t3 { margin-left: 7px; }
.lang { align-items: center; margin: 0 12px; width: 17px; }
.tray .t5 { margin-left: 5px; }
.tray .t6 { margin-left: 5px; width: 12px; }
.clock { align-items: flex-end; margin-left: 9px; width: 40px; }
.note { width: 11px; height: 11px; margin-left: 7px; border-radius: 50%; background: #43aee6; color: #12384f; font-size: 6px; line-height: 11px; text-align: center; }

.speck { position: absolute; width: 2px; height: 2px; background: #111; }
.s1 { left: 195px; top: 138px; }
.s2 { left: 731px; top: 215px; }
</style>
